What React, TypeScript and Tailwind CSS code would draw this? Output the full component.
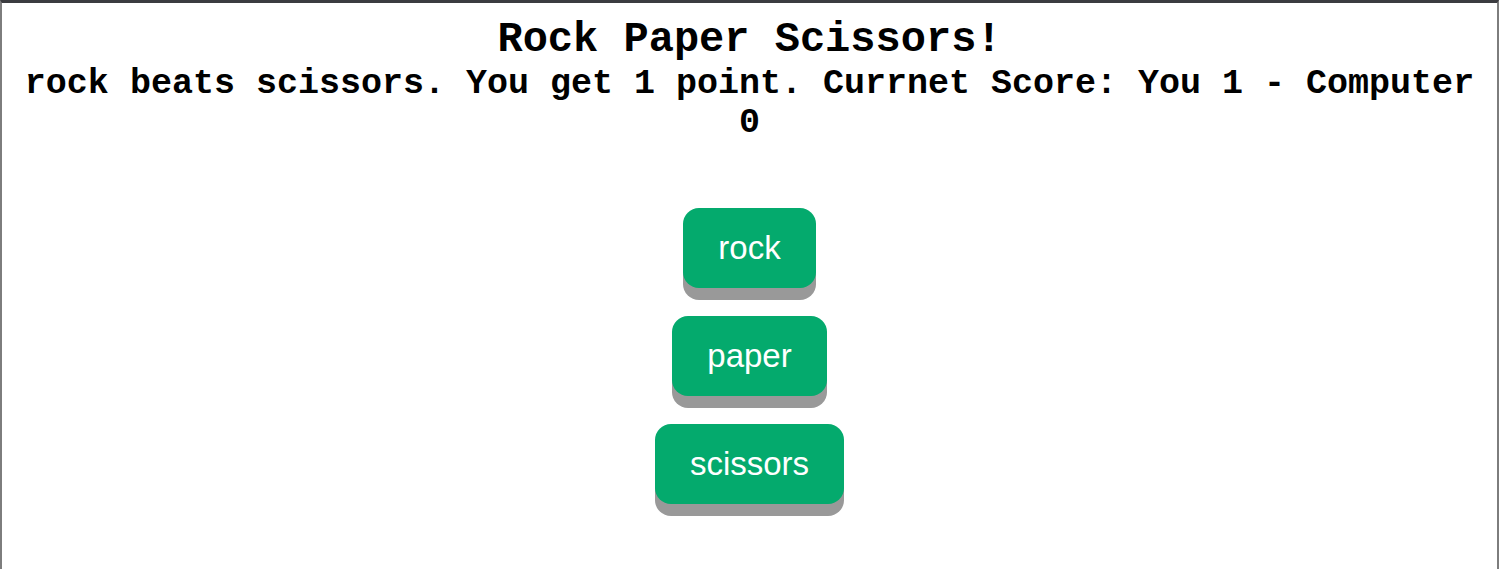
import React, { useState } from 'react';

type Choice = 'rock' | 'paper' | 'scissors';

const CHOICES: Choice[] = ['rock', 'paper', 'scissors'];

const App: React.FC = () => {
  const [score] = useState({ you: 1, computer: 0 });
  const [message] = useState('rock beats scissors. You get 1 point.');

  return (
    <div className="min-h-screen bg-white border-t-[3px] border-t-[#3b3c40] border-x-2 border-x-[#7d7d7d]">
      {/* Heading */}
      <div className="px-2 pt-[14px] text-center text-black font-bold font-['Liberation_Mono','Courier_New',monospace]">
        <h1 className="text-[42px] leading-[47.6px]">Rock Paper Scissors!</h1>
        <p className="text-[35px] leading-[39.7px]">
          {message} Currnet Score: You {score.you} - Computer {score.computer}
        </p>
      </div>

      {/* Choice buttons */}
      <div className="mt-[64px] flex flex-col items-center gap-7">
        {CHOICES.map(choice => (
          <button
            key={choice}
            className="px-[35px] py-[21px] leading-[38px] text-[33px] text-white bg-[#04aa6d] rounded-2xl shadow-[0_12px_0_#999] font-[family-name:Arial] cursor-pointer"
          >
            {choice}
          </button>
        ))}
      </div>
    </div>
  );
};

export default App;
